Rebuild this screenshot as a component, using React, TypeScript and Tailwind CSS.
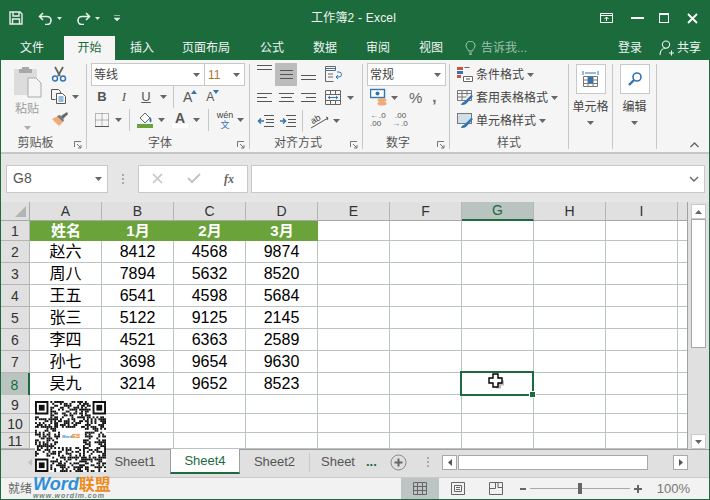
import type { ReactNode } from 'react';
import clsx from 'clsx';

const rows = [
  ['赵六', '8412', '4568', '9874'],
  ['周八', '7894', '5632', '8520'],
  ['王五', '6541', '4598', '5684'],
  ['张三', '5122', '9125', '2145'],
  ['李四', '4521', '6363', '2589'],
  ['孙七', '3698', '9654', '9630'],
  ['吴九', '3214', '9652', '8523'],
];
const colLetters = ['A', 'B', 'C', 'D', 'E', 'F', 'G', 'H', 'I', ''];

// small triangle used by every dropdown in the ribbon
function Caret({ className }: { className?: string }) {
  return (
    <svg width="7" height="4" viewBox="0 0 7 4" className={clsx('shrink-0', className)}>
      <path d="M0 0h7L3.5 4z" fill="#666" />
    </svg>
  );
}

function Launcher() {
  return (
    <svg width="8" height="8" viewBox="0 0 8 8" className="absolute right-[4px] top-[6px]">
      <path d="M.5 6V.5H7M3 3l4 4M7 4v3H4" fill="none" stroke="#777" />
    </svg>
  );
}

function Group({ label, launcher, className, children }: { label: string; launcher?: boolean; className: string; children: ReactNode }) {
  return (
    <div className={clsx('flex flex-col h-[91px] pt-[3px] shrink-0', className)}>
      <div className="h-[72px] shrink-0">{children}</div>
      <div className={clsx('relative h-[16px] shrink-0 flex items-center justify-center text-[12px] text-[#555]', launcher && 'pr-[16px]')}>
        {label}
        {launcher && <Launcher />}
      </div>
    </div>
  );
}

function GroupSep() {
  return <div className="w-px h-[85px] mt-[4px] bg-[#c6c9c8] shrink-0" />;
}

function VSep({ className }: { className?: string }) {
  return <div className={clsx('w-px bg-[#c6c9c8] shrink-0', className)} />;
}

function AlignIcon({ lines }: { lines: [number, number][] }) {
  return (
    <svg width="15" height="12" viewBox="0 0 15 12">
      {lines.map(([x, w], i) => (
        <rect key={i} x={x} y={i * 4 + 1} width={w} height="1" fill="#555" />
      ))}
    </svg>
  );
}

function StyleRow({ icon, text, className }: { icon: ReactNode; text: string; className?: string }) {
  return (
    <div className={clsx('flex items-center h-[23px] text-[12px] text-[#444]', className)}>
      <div className="w-[19px] ml-[7px] flex">{icon}</div>
      <span>{text}</span>
      <Caret className="ml-[3px]" />
    </div>
  );
}

function QrCode() {
  const n = 37;
  const cells: ReactNode[] = [];
  let seed = 17;
  const finder = (x: number, y: number) => x >= 0 && x < 8 && y >= 0 && y < 8;
  for (let y = 0; y < n; y++) {
    for (let x = 0; x < n; x++) {
      seed = (seed * 1103515245 + 12345) & 0x7fffffff;
      const center = x > 12 && x < 25 && y > 13 && y < 24;
      if (finder(x, y) || finder(n - 1 - x, y) || finder(x, n - 1 - y) || center) continue;
      if ((seed >> 12) % 100 < 52) cells.push(<rect key={x + '-' + y} x={x} y={y} width="1" height="1" />);
    }
  }
  const corner = (x: number, y: number) => (
    <g key={x + ':' + y}>
      <path d={`M${x} ${y}h7v7h-7zM${x + 1} ${y + 1}v5h5v-5z`} fillRule="evenodd" />
      <rect x={x + 2} y={y + 2} width="3" height="3" />
    </g>
  );
  return (
    <svg viewBox="0 0 37 37" width="71" height="71" fill="#111">
      <rect width="37" height="37" fill="#fff" />
      {cells}
      {corner(0, 0)}
      {corner(30, 0)}
      {corner(0, 30)}
    </svg>
  );
}

export default function App() {
  return (
    <div className="relative w-[710px] h-[500px] overflow-hidden flex flex-col bg-[#e6e6e6] font-['Liberation_Sans','Noto_Sans_CJK_SC',sans-serif] border-x border-b border-[#1b6b3d]">
      {/* title bar */}
      <div className="flex items-center h-[36px] bg-[#1b6b3d] text-white shrink-0 -mx-px">
        <div className="flex items-center w-[311px] shrink-0">
          <svg width="14" height="14" viewBox="0 0 14 14" className="ml-[9px]">
            <path d="M1 1h10l2 2v10H1zM4 1v4h6V1M3.5 13V8h7v5" fill="none" stroke="#e8f0ec" strokeWidth="1.4" />
          </svg>
          <svg width="15" height="13" viewBox="0 0 15 13" className="ml-[15px]">
            <path d="M5 1L1.5 4.5 5 8M2 4.5h7a4 4 0 0 1 0 8H7" fill="none" stroke="#e8f0ec" strokeWidth="1.6" />
          </svg>
          <svg width="5" height="3" viewBox="0 0 5 3" className="ml-[4px]"><path d="M0 0h5L2.5 3z" fill="#dfe9e3" /></svg>
          <svg width="15" height="13" viewBox="0 0 15 13" className="ml-[14px]">
            <path d="M10 1l3.5 3.5L10 8M13 4.5H6a4 4 0 0 0 0 8h2" fill="none" stroke="#e8f0ec" strokeWidth="1.6" />
          </svg>
          <svg width="5" height="3" viewBox="0 0 5 3" className="ml-[4px]"><path d="M0 0h5L2.5 3z" fill="#dfe9e3" /></svg>
          <svg width="6" height="6" viewBox="0 0 6 6" className="ml-[14px]"><path d="M0 .5h6M0 3h6L3 6z" fill="#dfe9e3" stroke="#dfe9e3" strokeWidth=".6" /></svg>
        </div>
        <span className="text-[12px] text-[#f2f6f4] tracking-[.2px]">工作簿2 - Excel</span>
        <div className="ml-auto flex items-center">
          <svg width="13" height="10" viewBox="0 0 13 10" className="mr-[18px]">
            <path d="M.5.5h12v9H.5zM.5 2.5h12M6.5 8V4M4.5 6l2-2 2 2" fill="none" stroke="#fff" />
          </svg>
          <div className="w-[13px] h-[2px] bg-white mr-[15px]" />
          <div className="w-[10px] h-[10px] border border-white border-t-2 mr-[18px]" />
          <svg width="11" height="11" viewBox="0 0 11 11" className="mr-[12px]">
            <path d="M1 1l9 9M10 1l-9 9" stroke="#fff" strokeWidth="1.8" />
          </svg>
        </div>
      </div>

      {/* ribbon tabs */}
      <div className="flex items-stretch h-[24px] bg-[#1b6b3d] text-[12px] text-[#f0f5f2] shrink-0 -mx-px">
        <div className="w-[64px] flex items-center justify-center">文件</div>
        <div className="w-[51px] flex items-center justify-center bg-[#f5f5f5] text-[#1b6b3d]">开始</div>
        <div className="w-[54px] flex items-center justify-center">插入</div>
        <div className="w-[62px] flex items-center justify-center ml-[6px]">页面布局</div>
        <div className="ml-[11px] w-[48px] flex items-center justify-center">公式</div>
        <div className="ml-[5px] w-[48px] flex items-center justify-center">数据</div>
        <div className="ml-[5px] w-[48px] flex items-center justify-center">审阅</div>
        <div className="ml-[5px] w-[48px] flex items-center justify-center">视图</div>
        <div className="ml-[10px] flex items-center text-[#9fc2ae]">
          <svg width="11" height="14" viewBox="0 0 11 14" className="mr-[5px]">
            <path d="M3.5 10C3 8 1 7 1 4.7a4.5 4.5 0 0 1 9 0C10 7 8 8 7.5 10zM4 12h3M4.5 13.5h2" fill="none" stroke="#a9c9b7" />
          </svg>
          告诉我...
        </div>
        <div className="ml-auto flex items-center">
          <span>登录</span>
          <svg width="15" height="16" viewBox="0 0 15 16" className="ml-[17px] mr-[3px]">
            <path d="M7 1a3.6 3.6 0 1 1 0 7.2A3.6 3.6 0 0 1 7 1zM1 15c0-4 2.500-6.500 5-6.800M10 13h5M12.500 10.500v5" fill="none" stroke="#f0f5f2" strokeWidth="1.1" />
          </svg>
          <span className="mr-[9px]">共享</span>
        </div>
      </div>

      {/* ribbon */}
      <div className="relative flex h-[94px] bg-[#f5f5f5] border-b-2 border-[#c4c7c6] shrink-0">
        <Group label="剪贴板" launcher className="w-[85px]">
          <div className="flex">
            <div className="w-[49px] flex flex-col items-center pl-[3px]">
              <svg width="29" height="32" viewBox="0 0 29 32" className="mt-[3px]">
                <rect x="1" y="3" width="23" height="26" fill="#dcdcdc" />
                <path d="M9 3V1h7v2h3v4H6V3z" fill="#a8a8a8" />
                <path d="M15 12h8l5 5v14H15z" fill="#f5f5f5" stroke="#aaa" />
              </svg>
              <span className="text-[12px] leading-[16px] text-[#9c9c9c] mt-[3px]">粘贴</span>
              <Caret className="mt-[9px] opacity-50" />
            </div>
            <div className="flex flex-col pl-[1px]">
              <svg width="16" height="16" viewBox="0 0 16 16" className="mt-[3px]">
                <path d="M4 1l5 9M12 1L7 10" stroke="#666" strokeWidth="1.8" />
                <circle cx="4" cy="12.500" r="2.500" fill="none" stroke="#2f74b5" strokeWidth="1.400" />
                <circle cx="12" cy="12.500" r="2.500" fill="none" stroke="#2f74b5" strokeWidth="1.400" />
              </svg>
              <div className="flex items-center mt-[7px]">
                <svg width="16" height="15" viewBox="0 0 16 15">
                  <path d="M.5.5h7l2 2v2M.5.5v10h4" fill="none" stroke="#555" />
                  <path d="M5.500 4.500h6l3 3v7h-9z" fill="#fff" stroke="#555" />
                  <path d="M7.500 8h5M7.500 10h5M7.500 12h5" stroke="#2f74b5" />
                </svg>
                <Caret className="ml-[5px]" />
              </div>
              <svg width="18" height="16" viewBox="0 0 18 16" className="mt-[7px]">
                <path d="M1 8l6-3 5 6-4 4z" fill="#eeaa78" />
                <path d="M6 5l3-1 4 5-1 2z" fill="#777" />
                <path d="M10 5l6-4 1 2-5 5z" fill="#666" />
              </svg>
            </div>
          </div>
        </Group>
        <GroupSep />

        <Group label="字体" launcher className="w-[162px]">
          <div className="flex ml-[4px] h-[23px]">
            <div className="w-[114px] flex items-center justify-between bg-white border border-[#c6c9c8] text-[12px] text-[#444] pl-[2px] pr-[4px]">
              等线<Caret />
            </div>
            <div className="w-[40px] flex items-center justify-between bg-white border border-l-0 border-[#c6c9c8] text-[12px] text-[#b5752f] pl-[3px] pr-[4px]">
              11<Caret />
            </div>
          </div>
          <div className="flex items-center h-[22px] ml-[4px] text-[#555]">
            <span className="w-[20px] text-center text-[13px] font-bold font-['Liberation_Sans'] ml-[1px]">B</span>
            <span className="w-[24px] text-center text-[13px] italic font-['Liberation_Serif']">I</span>
            <span className="w-[20px] text-center text-[13px] underline font-['Liberation_Sans']">U</span>
            <Caret className="ml-[4px]" />
            <VSep className="h-[22px] ml-[6px]" />
            <span className="ml-[9px] text-[14px] leading-none relative">A<svg width="6" height="4" viewBox="0 0 6 4" className="absolute -right-[5px] top-0"><path d="M3 0l3 4H0z" fill="#2f74b5" /></svg></span>
            <span className="ml-[14px] text-[12px] leading-none relative">A<svg width="6" height="4" viewBox="0 0 6 4" className="absolute -right-[5px] -top-[1px]"><path d="M0 0h6L3 4z" fill="#2f74b5" /></svg></span>
          </div>
          <div className="flex items-center h-[23px] ml-[8px]">
            <svg width="14" height="14" viewBox="0 0 14 14">
              <path d="M.5.5h13v13H.5zM7 .5v13M.5 7h13" fill="none" stroke="#777" strokeDasharray="1 1" />
              <path d="M0 13.500h14" stroke="#555" />
            </svg>
            <Caret className="ml-[6px]" />
            <VSep className="h-[22px] ml-[7px]" />
            <div className="ml-[7px] flex flex-col w-[16px]">
              <svg width="16" height="12" viewBox="0 0 16 12">
                <path d="M3 6l5-5 5 5-5 5z" fill="#fff" stroke="#666" />
                <path d="M13 5c2 2 2 4 1 5s-2 0-1-5z" fill="#2f74b5" />
              </svg>
              <div className="h-[4px] bg-[#6aa339]" />
            </div>
            <Caret className="ml-[5px]" />
            <div className="ml-[7px] flex flex-col items-center w-[16px]">
              <span className="text-[14px] leading-[12px] font-bold text-[#555]">A</span>
              <div className="h-[4px] w-[16px] bg-white" />
            </div>
            <Caret className="ml-[5px]" />
            <VSep className="h-[22px] ml-[8px]" />
            <div className="ml-[8px] flex flex-col items-center w-[16px] leading-none">
              <span className="text-[9px] text-[#444] leading-[10px]">wén</span>
              <span className="text-[9px] text-[#2f74b5] leading-[10px]">文</span>
            </div>
            <Caret className="ml-[4px]" />
          </div>
        </Group>
        <GroupSep />

        <Group label="对齐方式" launcher className="w-[112px]">
          <div className="flex items-start ml-[7px] h-[23px]">
            <div className="w-[15px] mt-[1px]"><AlignIcon lines={[[0, 15], [0, 15]]} /></div>
            <div className="w-[22px] h-[23px] ml-[3px] bg-[#bcbcbc] flex items-center justify-center"><AlignIcon lines={[[1, 13], [1, 13], [1, 13]]} /></div>
            <div className="w-[15px] ml-[4px] mt-[11px]"><AlignIcon lines={[[0, 15], [0, 15]]} /></div>
            <svg width="17" height="16" viewBox="0 0 17 16" className="ml-[9px] mt-[3px]">
              <path d="M.5.500h10v4h-10zM.5 4.500v11h8M3 8h5M3 11h5" fill="none" stroke="#666" />
              <path d="M12 6h2a2 2 0 0 1 0 5h-3M11 11l2-2M11 11l2 2" fill="none" stroke="#2f74b5" />
              <path d="M1 2.500h9" stroke="#2f74b5" />
            </svg>
          </div>
          <div className="flex items-center ml-[7px] h-[23px]">
            <AlignIcon lines={[[0, 15], [0, 10], [0, 15]]} />
            <div className="ml-[7px]"><AlignIcon lines={[[0, 15], [2, 11], [0, 15]]} /></div>
            <div className="ml-[7px]"><AlignIcon lines={[[0, 15], [5, 10], [0, 15]]} /></div>
            <svg width="17" height="15" viewBox="0 0 17 15" className="ml-[9px]">
              <path d="M.5.500h15v14H.5zM.5 4.500h15M.5 10.500h15M5.500.500v4M10.500.500v4M5.500 10.500v4M10.500 10.500v4" fill="none" stroke="#666" />
              <path d="M3 7.500h10" stroke="#2f74b5" />
              <path d="M3 7.500l2-2v4zM13 7.500l-2-2v4z" fill="#2f74b5" />
            </svg>
            <Caret className="ml-[5px]" />
          </div>
          <div className="flex items-center ml-[7px] h-[23px]">
            <svg width="17" height="12" viewBox="0 0 17 12">
              <path d="M7 .5h10M9 4.500h8M9 7.500h8M7 11.500h10" stroke="#555" />
              <path d="M7 6H2M4 3.500L1.500 6 4 8.500" stroke="#2f74b5" strokeWidth="1.500" fill="none" />
            </svg>
            <svg width="17" height="12" viewBox="0 0 17 12" className="ml-[5px]">
              <path d="M7 .5h10M9 4.500h8M9 7.500h8M7 11.500h10" stroke="#555" />
              <path d="M1 6h5M4 3.500L6.500 6 4 8.500" stroke="#2f74b5" strokeWidth="1.500" fill="none" />
            </svg>
            <VSep className="h-[22px] ml-[6px]" />
            <svg width="19" height="17" viewBox="0 0 19 17" className="ml-[7px]">
              <path d="M1 16L18 6" stroke="#555" />
              <path d="M16 5l2 1-1 2" fill="none" stroke="#555" />
              <text x="1" y="10" fontSize="9" fill="#444" transform="rotate(-30 6 8)" fontFamily="Liberation Sans">ab</text>
            </svg>
            <Caret className="ml-[4px]" />
          </div>
        </Group>
        <GroupSep />

        <Group label="数字" launcher className="w-[86px]">
          <div className="ml-[4px] w-[79px] h-[23px] flex items-center justify-between bg-white border border-[#c6c9c8] text-[12px] text-[#444] pl-[2px] pr-[4px]">
            常规<Caret />
          </div>
          <div className="flex items-center h-[23px] ml-[7px]">
            <svg width="17" height="19" viewBox="0 0 17 19">
              <rect x=".5" y="1.500" width="14" height="8" fill="#fff" stroke="#2f74b5" strokeWidth="1.400" />
              <circle cx="7.500" cy="5.500" r="2" fill="#2f74b5" />
              <ellipse cx="12" cy="12" rx="4.500" ry="2" fill="#eeaa78" />
              <ellipse cx="12" cy="15.500" rx="4.500" ry="2" fill="#eeaa78" />
            </svg>
            <Caret className="ml-[4px]" />
            <span className="ml-[11px] text-[15px] text-[#666] leading-none">%</span>
            <span className="ml-[10px] text-[15px] font-bold text-[#666] leading-none -mt-[3px]">,</span>
          </div>
          <div className="flex items-center h-[22px] ml-[7px]">
            <div className="w-[16px] text-[8px] leading-[8px] text-[#555] font-['Liberation_Sans']">
              <div className="flex"><span className="text-[#2f74b5] mr-[1px]">←</span>.0</div>
              <div>.00</div>
            </div>
            <div className="w-[16px] ml-[6px] text-[8px] leading-[8px] text-[#555] font-['Liberation_Sans']">
              <div className="pl-[3px]">.00</div>
              <div className="flex"><span className="text-[#2f74b5] mr-[1px]">→</span>.0</div>
            </div>
          </div>
        </Group>
        <GroupSep />

        <Group label="样式" className="w-[118px]">
          <StyleRow
            text="条件格式"
            icon={
              <svg width="16" height="15" viewBox="0 0 16 15">
                <path d="M0 0h6v3H0z" fill="#c8553d" />
                <path d="M0 4h6v3H0z" fill="#2f74b5" />
                <path d="M0 8h4v3H0z" fill="#c8553d" />
                <path d="M7.500.5h5M6.500 9.500h9v5h-9z" fill="#fff" stroke="#666" />
                <path d="M9 12h4" stroke="#444" />
              </svg>
            }
          />
          <StyleRow
            text="套用表格格式"
            icon={
              <svg width="17" height="16" viewBox="0 0 17 16">
                <path d="M.5.500h14v10H.5zM.5 3.500h14M.5 7h9M5 .500v10M10 .500v5" fill="none" stroke="#777" />
                <path d="M4 15c1-3 3-3 4-4l6-6 2 1-6 7c-2 2-4 2-6 2z" fill="#2f74b5" />
              </svg>
            }
          />
          <StyleRow
            text="单元格样式"
            icon={
              <svg width="17" height="16" viewBox="0 0 17 16">
                <rect x=".5" y=".5" width="14" height="10" fill="#cfe0ea" stroke="#777" />
                <path d="M4 15c1-3 3-3 4-4l6-6 2 1-6 7c-2 2-4 2-6 2z" fill="#2f74b5" />
              </svg>
            }
          />
        </Group>
        <GroupSep />

        <Group label="" className="w-[43px]">
          <div className="flex flex-col items-center">
            <div className="w-[30px] h-[30px] mt-[1px] bg-white border border-[#c6c9c8] flex items-center justify-center">
              <svg width="17" height="18" viewBox="0 0 17 18">
                <path d="M1 1v4M16 1v4M3 3h11" stroke="#2f74b5" />
                <path d="M1.500 6.500h14v10h-14zM1.500 10h14M1.500 13.500h14M6 6.500v10M11 6.500v10" fill="none" stroke="#777" />
                <rect x="6" y="7" width="5" height="6" fill="#2f74b5" />
              </svg>
            </div>
            <span className="text-[12px] leading-[16px] text-[#444] mt-[5px]">单元格</span>
            <Caret className="mt-[6px]" />
          </div>
        </Group>
        <GroupSep />

        <Group label="" className="w-[43px]">
          <div className="flex flex-col items-center">
            <div className="w-[30px] h-[30px] mt-[1px] bg-white border border-[#c6c9c8] flex items-center justify-center">
              <svg width="16" height="16" viewBox="0 0 16 16">
                <circle cx="10" cy="6" r="4" fill="none" stroke="#2f74b5" strokeWidth="1.600" />
                <path d="M7 9l-5 5" stroke="#2f74b5" strokeWidth="2.400" />
              </svg>
            </div>
            <span className="text-[12px] leading-[16px] text-[#444] mt-[5px]">编辑</span>
            <Caret className="mt-[6px]" />
          </div>
        </Group>
        <GroupSep />

        <svg width="9" height="6" viewBox="0 0 9 6" className="ml-auto mr-[10px] mt-[82px]">
          <path d="M.5 5l4-4 4 4" fill="none" stroke="#666" strokeWidth="1.400" />
        </svg>
      </div>

      {/* formula bar */}
      <div className="flex items-center h-[48px] shrink-0 pt-[1px] bg-[#e6e6e6]">
        <div className="ml-[5px] w-[102px] h-[28px] flex items-center justify-between bg-white border border-[#c9c9c9] pl-[6px] pr-[5px] text-[14px] text-[#555]">
          G8<Caret />
        </div>
        <div className="ml-[14px] w-[3px] h-[10px] border-l-2 border-dotted border-[#aaa]" />
        <div className="ml-[13px] w-[110px] h-[28px] flex items-center bg-white border border-[#c9c9c9]">
          <svg width="11" height="11" viewBox="0 0 11 11" className="ml-[13px]">
            <path d="M1 1l9 9M10 1l-9 9" stroke="#c4c4c4" strokeWidth="1.600" />
          </svg>
          <svg width="14" height="11" viewBox="0 0 14 11" className="ml-[24px]">
            <path d="M1 5l4 4 8-8" fill="none" stroke="#c4c4c4" strokeWidth="2" />
          </svg>
          <span className="ml-[23px] text-[12px] italic font-bold text-[#666] font-['Liberation_Serif']">fx</span>
        </div>
        <div className="ml-[3px] w-[454px] h-[28px] flex items-center justify-end bg-white border border-[#c9c9c9] pr-[5px]">
          <svg width="10" height="6" viewBox="0 0 10 6">
            <path d="M1 1l4 4 4-4" fill="none" stroke="#666" strokeWidth="1.400" />
          </svg>
        </div>
      </div>

      {/* sheet + vertical scrollbar */}
      <div className="flex h-[247px] shrink-0">
        <div className="relative w-[687px] shrink-0 overflow-hidden border-r border-[#a0a0a0] bg-white">
          <div className="grid grid-cols-[29px_repeat(9,72px)_11px] grid-rows-[19px_20px_repeat(7,22px)_19px_19px_16px] text-[16px] text-black">
            {/* column headers */}
            <div className="bg-[#e0e0e0] border-r border-b border-[#a8a8a8] flex items-end justify-end pr-[3px] pb-[3px]">
              <svg width="11" height="11" viewBox="0 0 11 11"><path d="M11 0v11H0z" fill="#b4b4b4" /></svg>
            </div>
            {colLetters.map((c, i) => (
              <div
                key={i}
                className={clsx(
                  'flex items-center justify-center text-[14px] border-r border-[#b5b5b5]',
                  c === 'G' ? 'bg-[#b9c4c1] text-[#1b6b3d] border-b-2 border-b-[#1b6b3d]' : 'bg-[#e0e0e0] text-[#333] border-b border-b-[#a8a8a8] pt-px'
                )}
              >
                {c}
              </div>
            ))}

            {/* row 1 */}
            <div className="bg-[#e0e0e0] border-r border-b border-[#b5b5b5] flex items-center justify-center text-[14px] text-[#333] pt-[2px]">1</div>
            {['姓名', '1月', '2月', '3月'].map((t) => (
              <div key={t} className="bg-[#6aa339] text-white font-bold text-[15px] flex items-center justify-center pt-px">{t}</div>
            ))}
            {Array.from({ length: 6 }).map((_, i) => (
              <div key={i} className="border-r border-b border-[#bcc4c1]" />
            ))}

            {/* data rows */}
            {rows.map((r, ri) => {
              const selected = ri === 6;
              return [
                <div
                  key={'h' + ri}
                  className={clsx(
                    'flex items-center justify-center text-[14px] pt-[2px]',
                    selected ? 'bg-[#b9c4c1] text-[#1b6b3d] border-r-2 border-[#1b6b3d]' : 'bg-[#e0e0e0] text-[#333] border-r border-b border-[#b5b5b5]'
                  )}
                >
                  {ri + 2}
                </div>,
                ...r.map((v, i) => (
                  <div key={ri + '-' + i} className="border-r border-b border-[#bcc4c1] flex items-center justify-center pt-px">{v}</div>
                )),
                ...Array.from({ length: 6 }).map((_, i) => (
                  <div
                    key={ri + 'e' + i}
                    className={clsx('border-r border-b border-[#bcc4c1]', selected && i === 2 && 'relative')}
                  >
                    {selected && i === 2 && (
                      <div className="absolute -left-[2px] -top-[2px] w-[74px] h-[25px] border-2 border-[#1b6b3d] z-10">
                        <div className="absolute -right-[3px] -bottom-[3px] w-[5px] h-[5px] bg-[#1b6b3d] outline outline-1 outline-white" />
                        <svg width="18" height="17" viewBox="0 0 18 17" className="absolute left-[26px] top-0">
                          <path d="M6 3h5v3h3v5h-3v3H6v-3H3V6h3z" fill="#777" opacity=".5" transform="translate(2 1.500)" />
                          <path d="M5 1h5v4h4v5h-4v4H5v-4H1V5h4z" fill="#fff" stroke="#000" strokeWidth="1.400" />
                        </svg>
                      </div>
                    )}
                  </div>
                )),
              ];
            })}

            {/* empty rows */}
            {[9, 10, 11].map((n) => [
              <div key={'h' + n} className="bg-[#e0e0e0] border-r border-b border-[#b5b5b5] flex items-center justify-center text-[14px] text-[#333] pt-[2px]">{n}</div>,
              ...Array.from({ length: 10 }).map((_, i) => (
                <div key={n + '-' + i} className="border-r border-b border-[#bcc4c1]" />
              )),
            ])}
          </div>
        </div>
        <div className="flex-1 flex flex-col bg-[#e0e0e0] pl-[3px] pt-[2px]">
          <div className="w-[15px] h-[15px] bg-white flex items-center justify-center border border-[#c9c9c9]">
            <svg width="7" height="4" viewBox="0 0 7 4"><path d="M3.500 0L7 4H0z" fill="#666" /></svg>
          </div>
          <div className="w-[15px] h-[129px] bg-white border border-[#a8a8a8]" />
          <div className="mt-auto w-[15px] h-[15px] bg-white flex items-center justify-center border border-[#c9c9c9]">
            <Caret />
          </div>
        </div>
      </div>

      {/* sheet tabs + horizontal scrollbar */}
      <div className="flex items-stretch h-[28px] shrink-0 bg-[#e0e0e0] border-t border-[#a0a0a0] text-[13px] text-[#555]">
        <div className="w-[99px] flex items-center pl-[27px] pb-[3px]">
          <svg width="4" height="7" viewBox="0 0 4 7"><path d="M4 0v7L0 3.500z" fill="#c0c0c0" /></svg>
        </div>
        <div className="w-[70px] flex items-center justify-center pb-[3px]">Sheet1</div>
        <div className="w-[70px] h-[25px] -mt-px flex items-center justify-center bg-white border-x border-[#a0a0a0] border-b-2 border-b-[#1b6b3d] text-[#1b6b3d]">Sheet4</div>
        <div className="w-[69px] flex items-center justify-center pb-[3px]">Sheet2</div>
        <VSep className="h-[19px] mt-[3px] bg-[#a8a8a8]" />
        <div className="ml-[11px] flex items-center pb-[3px] w-[35px]">Sheet</div>
        <div className="ml-[10px] flex items-center text-[#1b6b3d] font-bold pb-[3px] w-[12px]">...</div>
        <div className="ml-[12px] flex items-center pb-[3px]">
          <svg width="17" height="17" viewBox="0 0 17 17">
            <circle cx="8.500" cy="8.500" r="7.500" fill="none" stroke="#888" />
            <path d="M8.500 4.500v8M4.500 8.500h8" stroke="#666" strokeWidth="2" />
          </svg>
        </div>
        <div className="ml-[20px] w-[3px] h-[10px] self-center mb-[3px] border-l-2 border-dotted border-[#aaa]" />
        <div className="ml-[12px] flex items-center pb-[3px]">
          <div className="w-[15px] h-[15px] bg-white border border-[#a8a8a8] flex items-center justify-center">
            <svg width="4" height="7" viewBox="0 0 4 7"><path d="M4 0v7L0 3.500z" fill="#555" /></svg>
          </div>
          <div className="w-[190px] h-[15px] bg-white border border-[#a8a8a8] ml-px" />
          <div className="ml-[25px] w-[15px] h-[15px] bg-white border border-[#a8a8a8] flex items-center justify-center">
            <svg width="4" height="7" viewBox="0 0 4 7"><path d="M0 0v7l4-3.500z" fill="#555" /></svg>
          </div>
        </div>
      </div>

      {/* status bar */}
      <div className="flex items-center flex-1 bg-[#f2f2f2] border-t border-[#c9c9c9] text-[12px] text-[#666]">
        <span className="ml-[7px]">就绪</span>
        <div className="ml-auto flex items-center h-full">
          <div className="w-[38px] h-full bg-[#bcc4c4] flex items-center justify-center">
            <svg width="14" height="13" viewBox="0 0 14 13">
              <path d="M.5.500h13v12H.5zM.5 4.500h13M.5 8.500h13M4.500.500v12M9.500.500v12" fill="none" stroke="#666" />
            </svg>
          </div>
          <svg width="14" height="13" viewBox="0 0 14 13" className="ml-[12px]">
            <path d="M.5.500h13v12H.5zM3.500 3.500h7v6h-7zM5 5.500h4M5 7.500h4" fill="none" stroke="#666" />
          </svg>
          <svg width="14" height="13" viewBox="0 0 14 13" className="ml-[24px]">
            <path d="M.5.500h13v12H.5zM.5 6.500h6v-6M9 .500v5h4.500" fill="none" stroke="#666" />
          </svg>
          <div className="ml-[17px] w-[6px] h-[2px] bg-[#666]" />
          <div className="ml-[4px] relative w-[100px] h-px bg-[#a8a8a8] flex items-center justify-center">
            <div className="w-[4px] h-[11px] bg-[#666]" />
          </div>
          <svg width="8" height="8" viewBox="0 0 8 8" className="ml-[4px]">
            <path d="M4 0v8M0 4h8" stroke="#666" strokeWidth="2" />
          </svg>
          <span className="ml-[15px] mr-[19px] text-[13px] font-['Liberation_Sans'] text-[#777]">100%</span>
        </div>
      </div>

      {/* overlaid picture + watermark */}
      <div className="absolute left-[34px] top-[401px] z-20 w-[71px] h-[71px]">
        <QrCode />
        <div className="absolute left-[26px] top-[28px] w-[20px] h-[16px] bg-white flex flex-col items-center justify-center leading-none">
          <span className="text-[4px] font-bold text-[#2f8fd8]">Word<span className="text-[#ef8a1d]">联盟</span></span>
        </div>
      </div>
      <div className="absolute left-[32px] top-[475px] z-20 flex flex-col leading-none">
        <div className="flex items-baseline h-[17px]">
          <span className="text-[18px] leading-[18px] font-bold italic text-[#2f8fd8]">Word</span>
          <span className="text-[16px] leading-[18px] font-bold text-[#ef8a1d]">联盟</span>
        </div>
        <span className="text-[7px] leading-[8px] font-bold italic text-[#7b7b7b] tracking-[.9px] whitespace-nowrap">www.wordlm.com</span>
      </div>
    </div>
  );
}
